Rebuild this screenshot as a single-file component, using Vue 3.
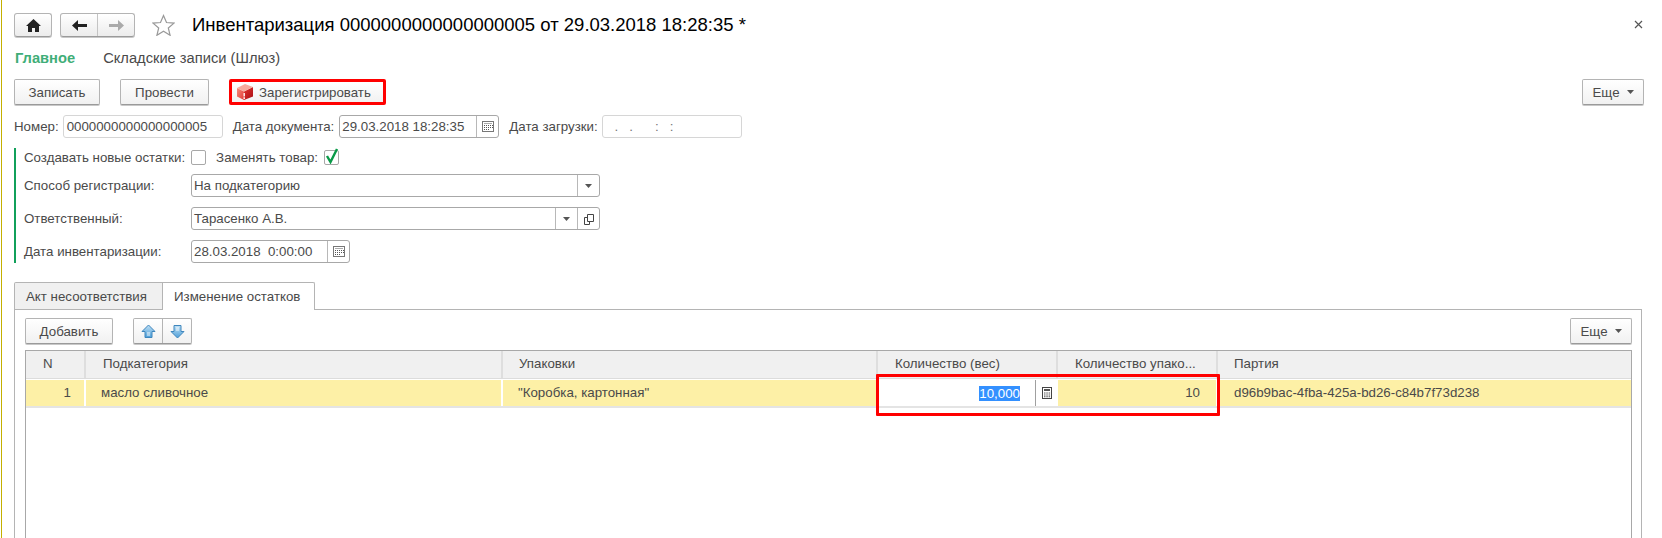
<script setup>
const columns = [
  { title: "N", pad: 17 },
  { title: "Подкатегория", pad: 17 },
  { title: "Упаковки", pad: 16 },
  { title: "Количество (вес)", pad: 17 },
  { title: "Количество упако...", pad: 17 },
  { title: "Партия", pad: 16 }
];
const colTemplate = "60px 417px 375px 180px 160px 1fr";
const loadMask = " .   .      :   :";
const invDate = "28.03.2018  0:00:00";
</script>

<template>
  <div class="page">
    <svg class="defs" width="0" height="0">
      <symbol id="cal" viewBox="0 0 12 11">
        <rect x="0.5" y="0.5" width="11" height="10" fill="#fff" stroke="#777" />
        <path d="M2 2h8v1H2z" fill="#aaa" />
        <path d="M2 4h1v1H2zM4 4h1v1H4zM6 4h1v1H6zM8 4h1v1H8zM10 4h1v1h-1zM2 6h1v1H2zM4 6h1v1H4zM6 6h1v1H6zM8 6h1v1H8zM10 6h1v1h-1zM2 8h1v1H2zM4 8h1v1H4zM6 8h1v1H6z" fill="#555" />
      </symbol>
      <symbol id="tri" viewBox="0 0 7 4">
        <path d="M0 0h7L3.500 4z" fill="#555" />
      </symbol>
    </svg>

    <div class="head">
      <button class="btn nav-btn home">
        <svg width="15" height="13" viewBox="0 0 15 13"><path d="M7.500 0L15 7h-2v6H9V9H6v4H2V7H0z" fill="#222" /></svg>
      </button>
      <div class="btn nav-group">
        <span class="nav-part">
          <svg width="15" height="11" viewBox="0 0 15 11"><path d="M0 5.500L6 0v4h9v3H6v4z" fill="#222" /></svg>
        </span>
        <span class="nav-part">
          <svg width="15" height="11" viewBox="0 0 15 11"><path d="M15 5.500L9 0v4H0v3h9v4z" fill="#aaa" /></svg>
        </span>
      </div>
      <svg class="star" width="23" height="22" viewBox="0 0 23 22">
        <path d="M11.500 1.500l3 7 7.500.6-5.700 4.900 1.800 7.300-6.600-4-6.600 4 1.800-7.300L1 9.100l7.500-.6z" fill="#fff" stroke="#999" stroke-width="1.200" />
      </svg>
      <h1 class="title">Инвентаризация 0000000000000000005 от 29.03.2018 18:28:35 *</h1>
      <svg class="close" width="9" height="9" viewBox="0 0 9 9"><path d="M1 1l7 7M8 1L1 8" stroke="#555" stroke-width="1.200" /></svg>
    </div>

    <div class="sections">
      <span class="sec-active">Главное</span>
      <span>Складские записи (Шлюз)</span>
    </div>

    <div class="commands">
      <button class="btn cmd w-write">Записать</button>
      <button class="btn cmd w-post">Провести</button>
      <button class="btn cmd reg">
        <svg width="16" height="16" viewBox="0 0 16 16">
          <defs>
            <linearGradient id="cubeL" x1="0" y1="0" x2="1" y2="1">
              <stop offset="0" stop-color="#f58b7c" />
              <stop offset="1" stop-color="#e23a36" />
            </linearGradient>
            <linearGradient id="cubeR" x1="0" y1="0" x2="1" y2="1">
              <stop offset="0" stop-color="#e2332f" />
              <stop offset="1" stop-color="#a80f14" />
            </linearGradient>
          </defs>
          <path d="M0 4l7 3.500V16l-7-3.500z" fill="url(#cubeL)" />
          <path d="M7 7.500L16 3v9.500L7 16z" fill="url(#cubeR)" />
          <path d="M0 4l8-4 8 3-9 4.500z" fill="#f8aa9c" />
          <path d="M6.500 9h1.400v3.500H6.500zM6.500 13.200h1.400V15H6.500z" fill="#fff" />
        </svg>
        <span>Зарегистрировать</span>
      </button>
      <button class="btn more">Еще <svg class="tri" width="7" height="4"><use href="#tri" /></svg></button>
    </div>

    <div class="doc-row">
      <label class="lbl">Номер:</label>
      <div class="field plain w-num">0000000000000000005</div>
      <label class="lbl l-date">Дата документа:</label>
      <div class="field w-date">
        <span class="val">29.03.2018 18:28:35</span>
        <span class="fbtn"><svg width="12" height="11"><use href="#cal" /></svg></span>
      </div>
      <label class="lbl l-load">Дата загрузки:</label>
      <div class="field plain w-load"><span class="mask">{{ loadMask }}</span></div>
    </div>

    <div class="group">
      <div class="check-row">
        <label class="lbl">Создавать новые остатки:</label>
        <span class="check"></span>
        <label class="lbl l-replace">Заменять товар:</label>
        <span class="check">
          <svg class="tick" width="15" height="16" viewBox="0 0 15 16"><path d="M3 8l3.500 6L13 1" fill="none" stroke="#0a9a48" stroke-width="2.400" /></svg>
        </span>
      </div>
      <div class="form-row">
        <label class="lbl form-lbl">Способ регистрации:</label>
        <div class="field w-wide">
          <span class="val">На подкатегорию</span>
          <span class="fbtn"><svg width="7" height="4"><use href="#tri" /></svg></span>
        </div>
      </div>
      <div class="form-row">
        <label class="lbl form-lbl">Ответственный:</label>
        <div class="field w-wide">
          <span class="val">Тарасенко А.В.</span>
          <span class="fbtn"><svg width="7" height="4"><use href="#tri" /></svg></span>
          <span class="fbtn">
            <svg width="10" height="12" viewBox="0 0 10 12"><path d="M3.500 8.500V1.500h6v7zM3.500 4.500H.5v7h5V8.500" fill="none" stroke="#444" /></svg>
          </span>
        </div>
      </div>
      <div class="form-row">
        <label class="lbl form-lbl">Дата инвентаризации:</label>
        <div class="field w-inv">
          <span class="val">{{ invDate }}</span>
          <span class="fbtn"><svg width="12" height="11"><use href="#cal" /></svg></span>
        </div>
      </div>
    </div>

    <div class="tabs">
      <div class="tab">Акт несоответствия</div>
      <div class="tab tab-on">Изменение остатков</div>
    </div>

    <div class="panel">
      <div class="panel-bar">
        <button class="btn cmd w-add">Добавить</button>
        <div class="btn arrows">
          <span class="arrow-part">
            <svg width="15" height="15" viewBox="0 0 15 15">
              <defs>
                <linearGradient id="arrowFill" x1="0" y1="0" x2="0" y2="1">
                  <stop offset="0" stop-color="#bfe0f5" />
                  <stop offset="1" stop-color="#4f9fd8" />
                </linearGradient>
              </defs>
              <path d="M7.500 1L14 7.500h-3v6H4v-6H1z" fill="url(#arrowFill)" stroke="#3f86bd" stroke-linejoin="round" />
              <path d="M6 8h3v4H6z" fill="#fff" opacity=".45" />
            </svg>
          </span>
          <span class="arrow-part">
            <svg width="15" height="15" viewBox="0 0 15 15">
              <path d="M7.500 14L1 7.500h3v-6h7v6h3z" fill="url(#arrowFill)" stroke="#3f86bd" stroke-linejoin="round" />
              <path d="M6 3h3v4H6z" fill="#fff" opacity=".45" />
            </svg>
          </span>
        </div>
        <button class="btn more">Еще <svg class="tri" width="7" height="4"><use href="#tri" /></svg></button>
      </div>

      <div class="table">
        <div class="thead" :style="{ gridTemplateColumns: colTemplate }">
          <div v-for="col in columns" :key="col.title" class="th" :style="{ paddingLeft: col.pad + 'px' }">{{ col.title }}</div>
        </div>
        <div class="tr" :style="{ gridTemplateColumns: colTemplate }">
          <div class="td num">1</div>
          <div class="td">масло сливочное</div>
          <div class="td">"Коробка, картонная"</div>
          <div class="td edit">
            <span class="edit-val"><span class="sel">10,000</span></span>
            <span class="edit-btn">
              <svg width="10" height="12" viewBox="0 0 10 12">
                <rect x="0.5" y="0.5" width="9" height="11" fill="#fff" stroke="#444" />
                <rect x="2" y="2" width="6" height="2" fill="#555" />
                <path d="M2 5.500h1.500v1H2zM4.300 5.500h1.500v1H4.300zM6.600 5.500h1.500v1H6.600zM2 7.500h1.500v1H2zM4.300 7.500h1.500v1H4.300zM6.600 7.500h1.500v1H6.600zM2 9.300h1.500v1H2zM4.300 9.300h1.500v1H4.300zM6.600 9.300h1.500v1H6.600z" fill="#555" />
              </svg>
            </span>
          </div>
          <div class="td right">10</div>
          <div class="td last">d96b9bac-4fba-425a-bd26-c84b7f73d238</div>
        </div>
        <div class="red-box"></div>
      </div>
    </div>
  </div>
</template>

<style>
html, body {
  margin: 0;
  background: #fff;
  overflow: hidden;
}
</style>

<style scoped>
.page {
  position: relative;
  box-sizing: border-box;
  width: 1661px;
  height: 538px;
  margin-left: 1px;
  border-left: 1px solid #c4b000;
  padding-left: 12px;
  overflow: hidden;
  background: #fff;
  font-family: "Liberation Sans", Arial, sans-serif;
  font-size: 13.3px;
  color: #4a4a4a;
}
.defs {
  position: absolute;
}
.btn {
  box-sizing: border-box;
  display: inline-flex;
  align-items: center;
  justify-content: center;
  height: 26px;
  padding: 0;
  border: 1px solid #b4b4b4;
  border-bottom-color: #9a9a9a;
  border-radius: 2px;
  background: linear-gradient(#fff, #f1f1f1);
  box-shadow: 0 1px 0 #c8c8c8;
  font: inherit;
  color: inherit;
}
.head {
  display: flex;
  align-items: center;
  height: 24px;
  padding-top: 13px;
}
.nav-btn,
.nav-group {
  height: 24px;
  border-radius: 3px;
  background: linear-gradient(#fff, #ececec);
}
.home {
  width: 38px;
}
.nav-group {
  width: 75px;
  margin-left: 8px;
}
.nav-part {
  display: flex;
  flex: 1;
  align-items: center;
  justify-content: center;
  height: 100%;
}
.nav-part + .nav-part {
  border-left: 1px solid #c4c4c4;
}
.star {
  margin-left: 17px;
}
.title {
  margin: 0 0 0 17px;
  font-size: 18.5px;
  font-weight: 400;
  color: #000;
  white-space: nowrap;
}
.close {
  margin-left: auto;
  margin-right: 19px;
  margin-top: -2px;
}
.sections {
  display: flex;
  gap: 28px;
  height: 18px;
  margin-top: 12px;
  padding-left: 1px;
  line-height: 18px;
  font-size: 14.7px;
}
.sec-active {
  font-weight: 700;
  color: #3fae78;
}
.commands {
  display: flex;
  align-items: center;
  height: 26px;
  margin-top: 12px;
  padding-right: 18px;
}
.cmd {
  margin-right: 20px;
}
.w-write {
  width: 86px;
}
.w-post {
  width: 89px;
}
.reg {
  justify-content: flex-start;
  gap: 6px;
  width: 157px;
  padding-left: 5px;
  border: 3px solid #f00;
  border-radius: 2px;
  box-shadow: none;
}
.more {
  gap: 7px;
  width: 62px;
  margin-left: auto;
}
.doc-row {
  display: flex;
  align-items: center;
  height: 23px;
  margin-top: 10px;
}
.lbl {
  white-space: pre;
}
.field {
  box-sizing: border-box;
  display: flex;
  align-items: stretch;
  height: 23px;
  border: 1px solid #a8a8a8;
  border-radius: 3px;
  background: #fff;
  line-height: 21px;
  white-space: pre;
}
.plain {
  border-color: #d6d6d6;
}
.val {
  flex: 1;
  padding-left: 2px;
}
.w-num {
  width: 160px;
  margin-left: 4px;
  padding-left: 3px;
}
.l-date {
  margin-left: 10px;
}
.w-date {
  width: 160px;
  margin-left: 5px;
}
.l-load {
  margin-left: 10px;
}
.w-load {
  width: 140px;
  margin-left: 4px;
  padding-left: 8px;
}
.mask {
  color: #777;
}
.fbtn {
  display: flex;
  align-items: center;
  justify-content: center;
  width: 21px;
  border-left: 1px solid #b8b8b8;
}
.group {
  box-sizing: border-box;
  height: 115px;
  margin-top: 10px;
  padding-left: 8px;
  border-left: 2px solid #11a05a;
}
.check-row {
  display: flex;
  align-items: center;
  height: 16px;
  padding-top: 1px;
}
.check {
  box-sizing: border-box;
  position: relative;
  width: 15px;
  height: 15px;
  margin-left: 6px;
  border: 1px solid #a8a8a8;
  border-radius: 2px;
}
.tick {
  position: absolute;
  top: -3px;
  left: -1px;
}
.l-replace {
  margin-left: 10px;
}
.form-row {
  display: flex;
  align-items: center;
  height: 23px;
  margin-top: 10px;
}
.check-row + .form-row {
  margin-top: 9px;
}
.form-lbl {
  width: 167px;
}
.w-wide {
  width: 409px;
}
.w-inv {
  width: 159px;
}
.tabs {
  display: flex;
  height: 27px;
  margin-top: 19px;
}
.tab {
  box-sizing: border-box;
  position: relative;
  width: 149px;
  padding-left: 11px;
  border: 1px solid #b4b4b4;
  border-bottom: 0;
  border-radius: 2px 0 0 0;
  background: #f0f0f0;
  line-height: 28px;
}
.tab-on {
  z-index: 1;
  width: 153px;
  height: 28px;
  margin-left: -1px;
  background: #fff;
  border-radius: 0 2px 0 0;
}
.panel {
  box-sizing: border-box;
  position: relative;
  width: 1628px;
  height: 300px;
  padding: 8px 9px 0 10px;
  border: 1px solid #b4b4b4;
  border-bottom: 0;
}
.panel-bar {
  display: flex;
  align-items: center;
  height: 26px;
}
.w-add {
  width: 88px;
}
.arrows {
  width: 59px;
}
.arrow-part {
  display: flex;
  flex: 1;
  align-items: center;
  justify-content: center;
  height: 100%;
}
.arrow-part + .arrow-part {
  border-left: 1px solid #b4b4b4;
}
.table {
  position: relative;
  height: 200px;
  margin-top: 6px;
  border: 1px solid #a8a8a8;
  border-bottom: 0;
}
.thead,
.tr {
  display: grid;
}
.thead {
  height: 27px;
  border-bottom: 1px solid #dcdcdc;
}
.th {
  background: #f0f0f0;
  border-right: 2px solid #dedede;
  line-height: 26px;
  white-space: nowrap;
}
.th:last-child {
  border-right: 0;
}
.tr {
  height: 26px;
  margin-top: 1px;
  border-bottom: 2px solid #e4e4e4;
}
.td {
  box-sizing: border-box;
  padding-left: 15px;
  background: #fdf0a6;
  border-right: 2px solid #fff;
  line-height: 26px;
  white-space: pre;
}
.td.last {
  padding-left: 16px;
  border-right: 0;
}
.num {
  padding: 0 13px 0 0;
  text-align: right;
}
.right {
  padding: 0 16px 0 0;
  text-align: right;
}
.edit {
  display: flex;
  padding: 0;
  background: #fff;
  border-right: 0;
}
.edit-val {
  display: flex;
  flex: 1;
  justify-content: flex-end;
  align-items: center;
  padding-right: 15px;
  border-right: 1px solid #a0a0a0;
}
.sel {
  height: 15px;
  background: #3390ff;
  color: #fff;
  line-height: 15px;
}
.edit-btn {
  display: flex;
  align-items: center;
  justify-content: center;
  width: 22px;
}
.red-box {
  box-sizing: border-box;
  position: absolute;
  top: 23px;
  left: 850px;
  width: 344px;
  height: 42px;
  border: 3px solid #f00;
  border-radius: 1px;
}
</style>
